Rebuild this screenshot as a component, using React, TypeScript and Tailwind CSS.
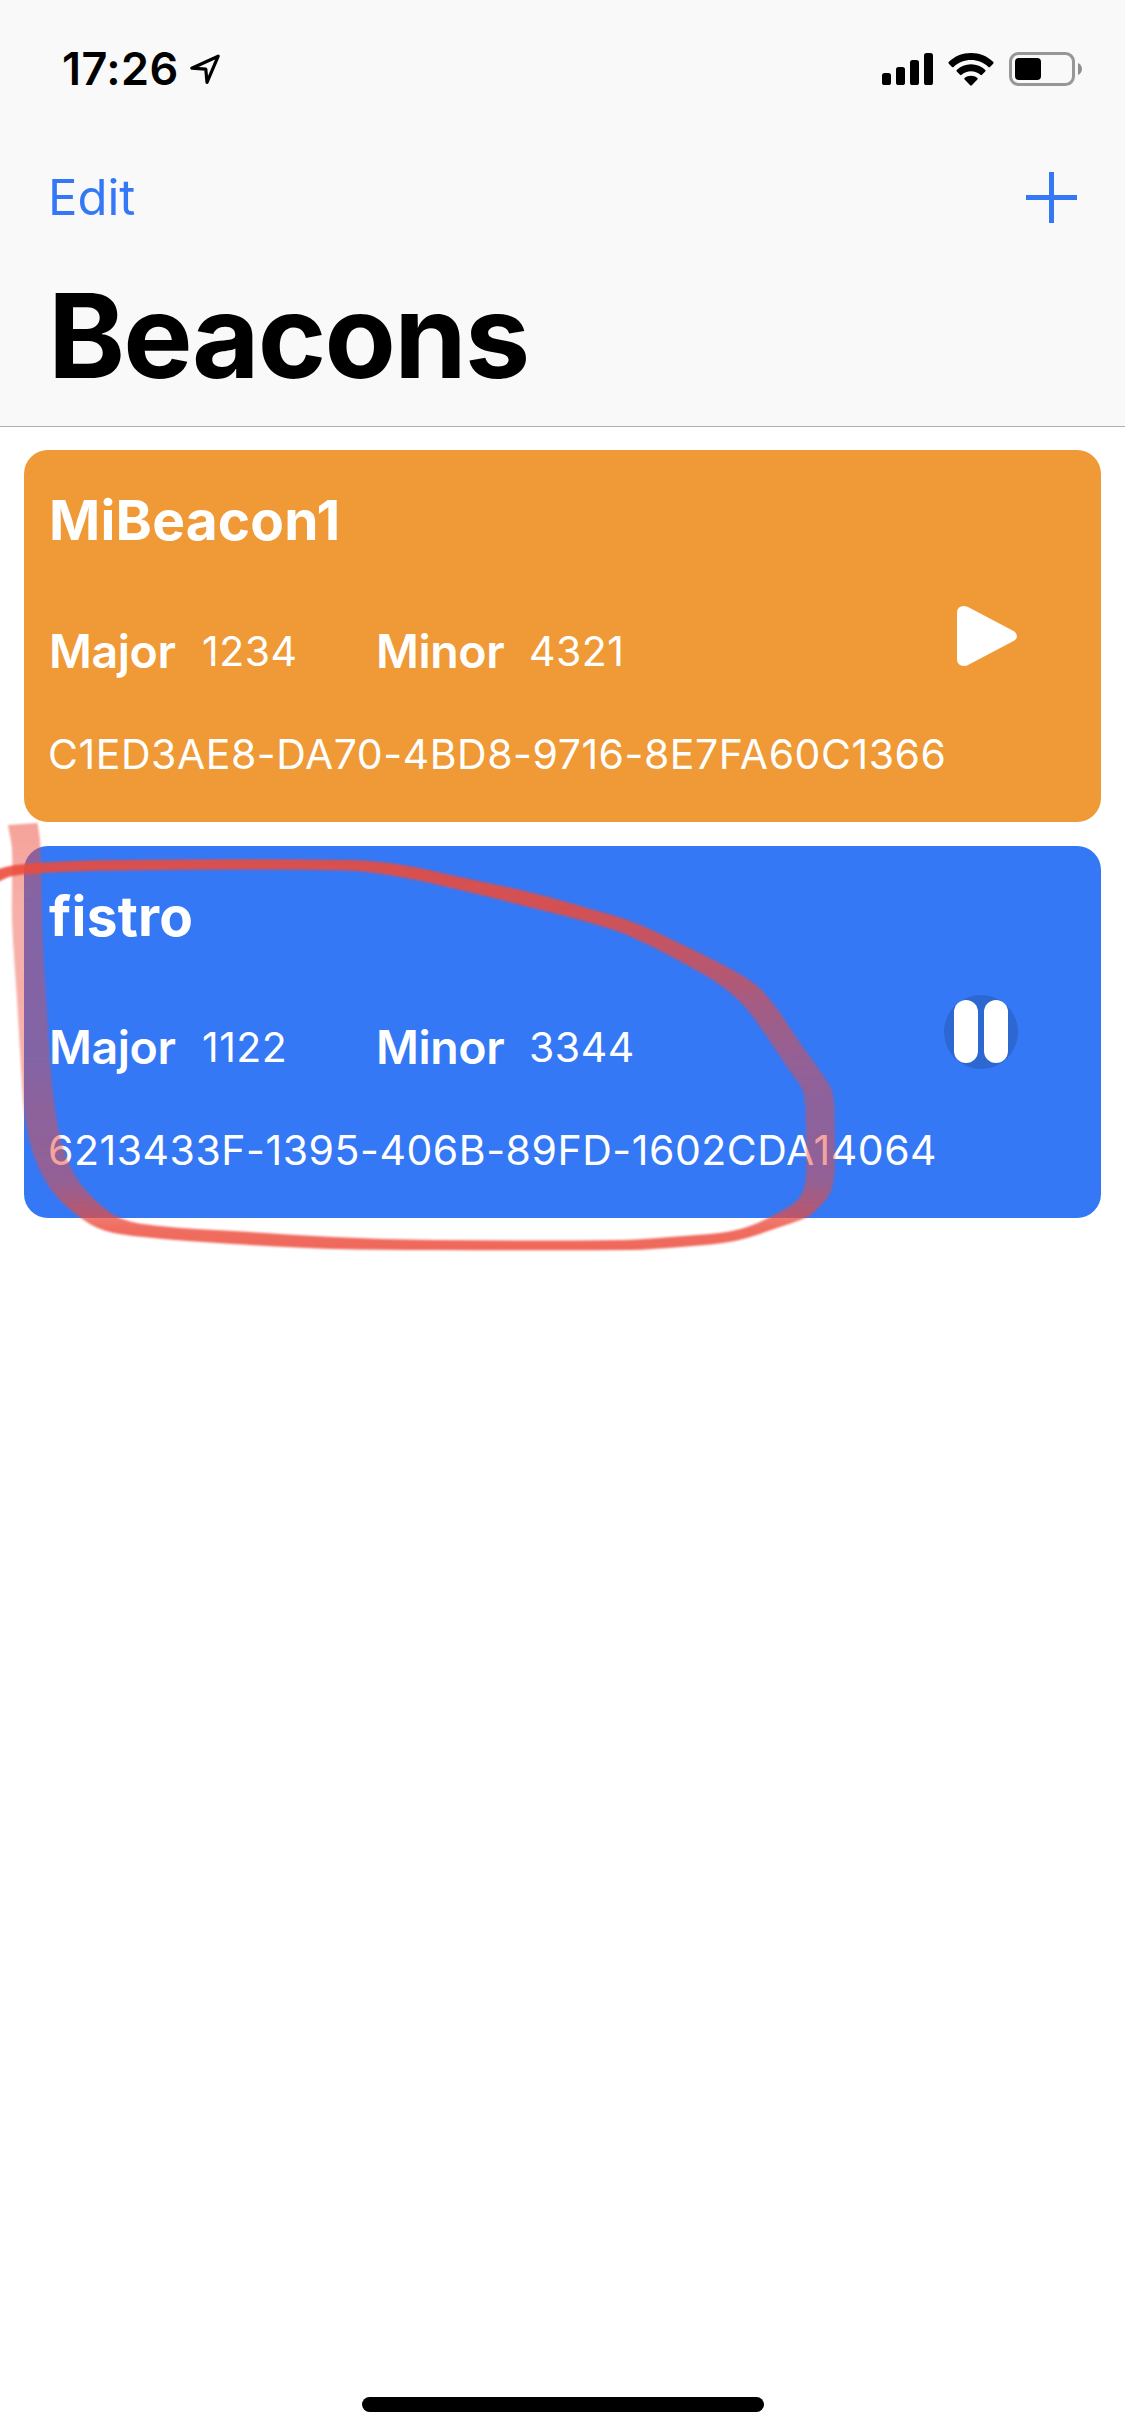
type Point = [number, number];

type Beacon = {
  name: string;
  major: string;
  minor: string;
  uuid: string;
  active: boolean;
};

const beacons: Beacon[] = [
  { name: "MiBeacon1", major: "1234", minor: "4321", uuid: "C1ED3AE8-DA70-4BD8-9716-8E7FA60C1366", active: false },
  { name: "fistro", major: "1122", minor: "3344", uuid: "6213433F-1395-406B-89FD-1602CDA14064", active: true },
];

function LocationIcon() {
  return (
    <svg className="ml-[10px] mt-[-1px] h-[32px] w-[32px]" viewBox="0 0 32 32" fill="none" stroke="black" strokeWidth="3.2" strokeLinejoin="round">
      <path d="M29.2 3.2 L2.8 15.2 L16.8 16.2 L18 29.4 Z" />
    </svg>
  );
}

function SignalIcon() {
  return (
    <svg className="h-[32px] w-[51px]" viewBox="0 0 51 32">
      <rect x="0" y="20" width="9" height="12" rx="2.6" />
      <rect x="14" y="14" width="9" height="18" rx="2.6" />
      <rect x="28" y="7" width="9" height="25" rx="2.6" />
      <rect x="42" y="0" width="9" height="32" rx="2.6" />
    </svg>
  );
}

function WifiIcon() {
  return (
    <svg className="ml-[15px] h-[33px] w-[46px]" viewBox="0 0 46 33">
      <path d="M23 0 C31.5 0 39.5 3.2 45.3 9 Q46 9.9 45.2 10.7 L42 13.9 Q41.2 14.6 40.4 13.9 C35.7 9.4 29.5 7 23 7 C16.500 7 10.300 9.400 5.600 13.900 Q4.800 14.600 4 13.900 L0.800 10.700 Q0 9.900 0.700 9 C6.500 3.200 14.500 0 23 0 Z" />
      <path d="M23 11.300 C28.500 11.300 33.500 13.400 37.300 17 Q38 17.800 37.200 18.600 L34 21.800 Q33.200 22.500 32.400 21.800 C29.800 19.500 26.500 18.200 23 18.200 C19.500 18.200 16.200 19.500 13.600 21.800 Q12.800 22.500 12 21.800 L8.800 18.600 Q8 17.800 8.700 17 C12.500 13.400 17.500 11.300 23 11.300 Z" />
      <path d="M23 22.700 C25.500 22.700 27.700 23.600 29.400 25 Q30.200 25.800 29.400 26.600 L23.800 32.300 Q23 33 22.200 32.300 L16.600 26.600 Q15.800 25.800 16.600 25 C18.300 23.600 20.500 22.700 23 22.700 Z" />
    </svg>
  );
}

function BatteryIcon() {
  return (
    <svg className="ml-[15px] h-[34px] w-[74px]" viewBox="0 0 74 34">
      <rect x="1.500" y="1.500" width="63" height="31" rx="8" fill="none" stroke="#979797" strokeWidth="3" />
      <rect x="6" y="6" width="26" height="22" rx="4" />
      <path d="M69 11 C74.300 13 74.300 21 69 23 Z" fill="#8e8e8e" />
    </svg>
  );
}

function PlusIcon() {
  return (
    <svg className="h-[51px] w-[51px]" viewBox="0 0 51 51" fill="#3478f6">
      <rect x="23" y="0" width="5" height="51" />
      <rect x="0" y="23" width="51" height="5" />
    </svg>
  );
}

function PlayIcon() {
  return (
    <svg className="h-[74px] w-[74px]" viewBox="0 0 74 74" fill="white">
      <path d="M13 14 Q13 7 20 7 Q22.500 7 25 8.500 L70 32.200 Q73 34 73 37 Q73 40 70 41.800 L25 65.500 Q22.500 67 20 67 Q13 67 13 60 Z" />
    </svg>
  );
}

function PauseIcon() {
  return (
    <svg className="h-[74px] w-[74px]" viewBox="0 0 74 74" fill="white">
      <circle cx="37" cy="37" r="37" fill="#2c67d2" />
      <rect x="10" y="5" width="24" height="63" rx="12" />
      <rect x="40" y="5" width="24" height="63" rx="12" />
    </svg>
  );
}

function BeaconCard({ beacon }: { beacon: Beacon }) {
  return (
    <article
      className={`flex h-[372px] items-center justify-between rounded-[24px] pr-[83px] pl-[25px] text-white ${
        beacon.active ? "bg-[#3478f6]" : "bg-[#ef9a36]"
      }`}
    >
      <div className="flex h-full min-w-0 flex-1 flex-col pt-[27px]">
        <h2 className="h-[86px] text-[55px] leading-[86px] font-bold tracking-[0.2px] whitespace-nowrap">{beacon.name}</h2>
        <div className="mt-[53px] flex h-[70px] items-center">
          <div className="flex w-[327px] items-center">
            <span className="w-[153px] text-[46.5px] leading-[70px] font-semibold tracking-[-0.4px]">Major</span>
            <span className="text-[41px] leading-[70px] font-normal tracking-[0.5px]">{beacon.major}</span>
          </div>
          <div className="flex items-center">
            <span className="w-[153px] text-[46.5px] leading-[70px] font-semibold tracking-[-0.4px]">Minor</span>
            <span className="text-[41px] leading-[70px] font-normal tracking-[0.5px]">{beacon.minor}</span>
          </div>
        </div>
        <p className="mt-[38px] -ml-px text-[41px] leading-[60px] font-normal tracking-[0.540px] whitespace-nowrap">{beacon.uuid}</p>
      </div>
      <button className="shrink-0" aria-label={beacon.active ? "Pause" : "Play"}>
        {beacon.active ? <PauseIcon /> : <PlayIcon />}
      </button>
    </article>
  );
}

/** Smooth curve through the points, as cubic segments. */
function curve(points: Point[]): string {
  let d = "";
  for (let i = 0; i < points.length - 1; i++) {
    const p0 = points[Math.max(0, i - 1)];
    const p1 = points[i];
    const p2 = points[i + 1];
    const p3 = points[Math.min(points.length - 1, i + 2)];
    // Tangents are scaled to the segment so that uneven spacing gives no loops.
    const seg = Math.hypot(p2[0] - p1[0], p2[1] - p1[1]);
    const l1 = Math.hypot(p2[0] - p0[0], p2[1] - p0[1]);
    const l2 = Math.hypot(p3[0] - p1[0], p3[1] - p1[1]);
    const a = [p1[0] + ((p2[0] - p0[0]) / l1) * (seg / 3), p1[1] + ((p2[1] - p0[1]) / l1) * (seg / 3)];
    const b = [p2[0] - ((p3[0] - p1[0]) / l2) * (seg / 3), p2[1] - ((p3[1] - p1[1]) / l2) * (seg / 3)];
    d += `C${a[0]} ${a[1]} ${b[0]} ${b[1]} ${p2[0]} ${p2[1]}`;
  }
  return d;
}

function ribbon(outer: Point[], inner: Point[]): string {
  const back = [...inner].reverse();
  return `M${outer[0][0]} ${outer[0][1]}${curve(outer)}L${back[0][0]} ${back[0][1]}${curve(back)}Z`;
}

const upperOuter: Point[] = [
  [-6, 871], [0, 868.5], [15, 865], [43, 862.500], [120, 860], [350, 860], [400, 864.500], [460, 877], [533, 893], [587, 908],
  [633, 922], [683, 945], [727, 967], [756, 985], [775, 1006], [800, 1043], [823, 1075], [832, 1091], [834.500, 1107],
];
const upperInner: Point[] = [
  [-6, 885], [0, 881], [13, 876], [43, 873], [120, 870.500], [347, 870.500], [400, 877], [460, 890], [533, 908], [587, 922],
  [627, 935], [683, 963], [720, 985], [744, 1006], [767, 1037], [787, 1067], [802, 1089], [805.500, 1107],
];
const lowerOuter: Point[] = [
  [8, 825], [12, 850], [12, 920], [17, 1000], [21, 1067], [25, 1117], [33, 1153], [50, 1188], [77, 1215], [103, 1230], [143, 1237],
  [233, 1244], [333, 1249], [433, 1250], [630, 1250], [675, 1247.500], [723, 1243], [747, 1238], [777, 1228], [807, 1217], [820, 1206],
  [830, 1193], [834.500, 1173], [834.500, 1107],
];
const lowerInner: Point[] = [
  [37.500, 823], [40, 840], [41, 867], [43, 947], [47, 1013], [52, 1083], [60, 1137], [73, 1172], [93, 1198], [120, 1218], [160, 1226],
  [233, 1231], [333, 1237], [433, 1240], [625, 1240], [670, 1237], [723, 1232.500], [747, 1227], [770, 1217], [793, 1204],
  [802, 1193], [806, 1173], [805.500, 1107],
];

function MarkerStroke() {
  return (
    <svg className="pointer-events-none absolute top-0 left-0 h-[1300px] w-[1125px]" viewBox="0 0 1125 1300">
      <defs>
        <linearGradient id="upper" gradientUnits="userSpaceOnUse" x1="0" y1="860" x2="0" y2="1110">
          <stop offset="0" stopColor="#ec4b3b" stopOpacity="0.9" />
          <stop offset="0.200" stopColor="#ec4b3b" stopOpacity="0.86" />
          <stop offset="0.400" stopColor="#ec4b3b" stopOpacity="0.74" />
          <stop offset="0.600" stopColor="#ec4b3b" stopOpacity="0.6" />
          <stop offset="0.800" stopColor="#ec4b3b" stopOpacity="0.52" />
          <stop offset="1" stopColor="#ec4b3b" stopOpacity="0.48" />
        </linearGradient>
        <linearGradient id="lower" gradientUnits="userSpaceOnUse" x1="0" y1="820" x2="0" y2="1250">
          <stop offset="0" stopColor="#ec4b3b" stopOpacity="0.52" />
          <stop offset="0.200" stopColor="#ec4b3b" stopOpacity="0.44" />
          <stop offset="0.550" stopColor="#ec4b3b" stopOpacity="0.43" />
          <stop offset="0.670" stopColor="#ec4b3b" stopOpacity="0.48" />
          <stop offset="0.840" stopColor="#ec4b3b" stopOpacity="0.52" />
          <stop offset="0.910" stopColor="#ec4b3b" stopOpacity="0.7" />
          <stop offset="0.950" stopColor="#ec4b3b" stopOpacity="0.81" />
          <stop offset="1" stopColor="#ec4b3b" stopOpacity="0.84" />
        </linearGradient>
        <filter id="soft" filterUnits="userSpaceOnUse" x="-10" y="800" width="900" height="480" colorInterpolationFilters="sRGB">
          <feGaussianBlur stdDeviation="1.200" />
        </filter>
      </defs>
      <g filter="url(#soft)">
        <path d={ribbon(lowerOuter, lowerInner)} fill="url(#lower)" />
        <path d={ribbon(upperOuter, upperInner)} fill="url(#upper)" />
      </g>
    </svg>
  );
}

export default function App() {
  return (
    <div className="relative flex h-[2436px] w-[1125px] flex-col overflow-hidden bg-white font-['Inter',sans-serif] text-black">
      <header className="h-[427px] border-b border-[#afafaf] bg-[#f9f9f9]">
        <div className="flex h-[138px] items-center justify-between pr-[42px] pl-[62px]">
          <div className="flex items-center">
            <span className="text-[45px] leading-[60px] font-semibold tracking-[0.4px]">17:26</span>
            <LocationIcon />
          </div>
          <div className="flex items-center">
            <SignalIcon />
            <WifiIcon />
            <BatteryIcon />
          </div>
        </div>
        <nav className="flex h-[119px] items-center justify-between pr-[48px] pl-[48px] text-[#3478f6]">
          <button className="text-[49px] leading-[60px]">Edit</button>
          <button aria-label="Add">
            <PlusIcon />
          </button>
        </nav>
        <h1 className="pl-[48px] text-[116.500px] leading-[157px] font-bold tracking-[-1.8px]">Beacons</h1>
      </header>
      <main className="flex grow flex-col gap-6 px-6 pt-[23px]">
        {beacons.map((beacon) => (
          <BeaconCard key={beacon.uuid} beacon={beacon} />
        ))}
      </main>
      <footer className="flex justify-center pb-6">
        <div className="h-[15px] w-[402px] rounded-full bg-black" />
      </footer>
      <MarkerStroke />
    </div>
  );
}
